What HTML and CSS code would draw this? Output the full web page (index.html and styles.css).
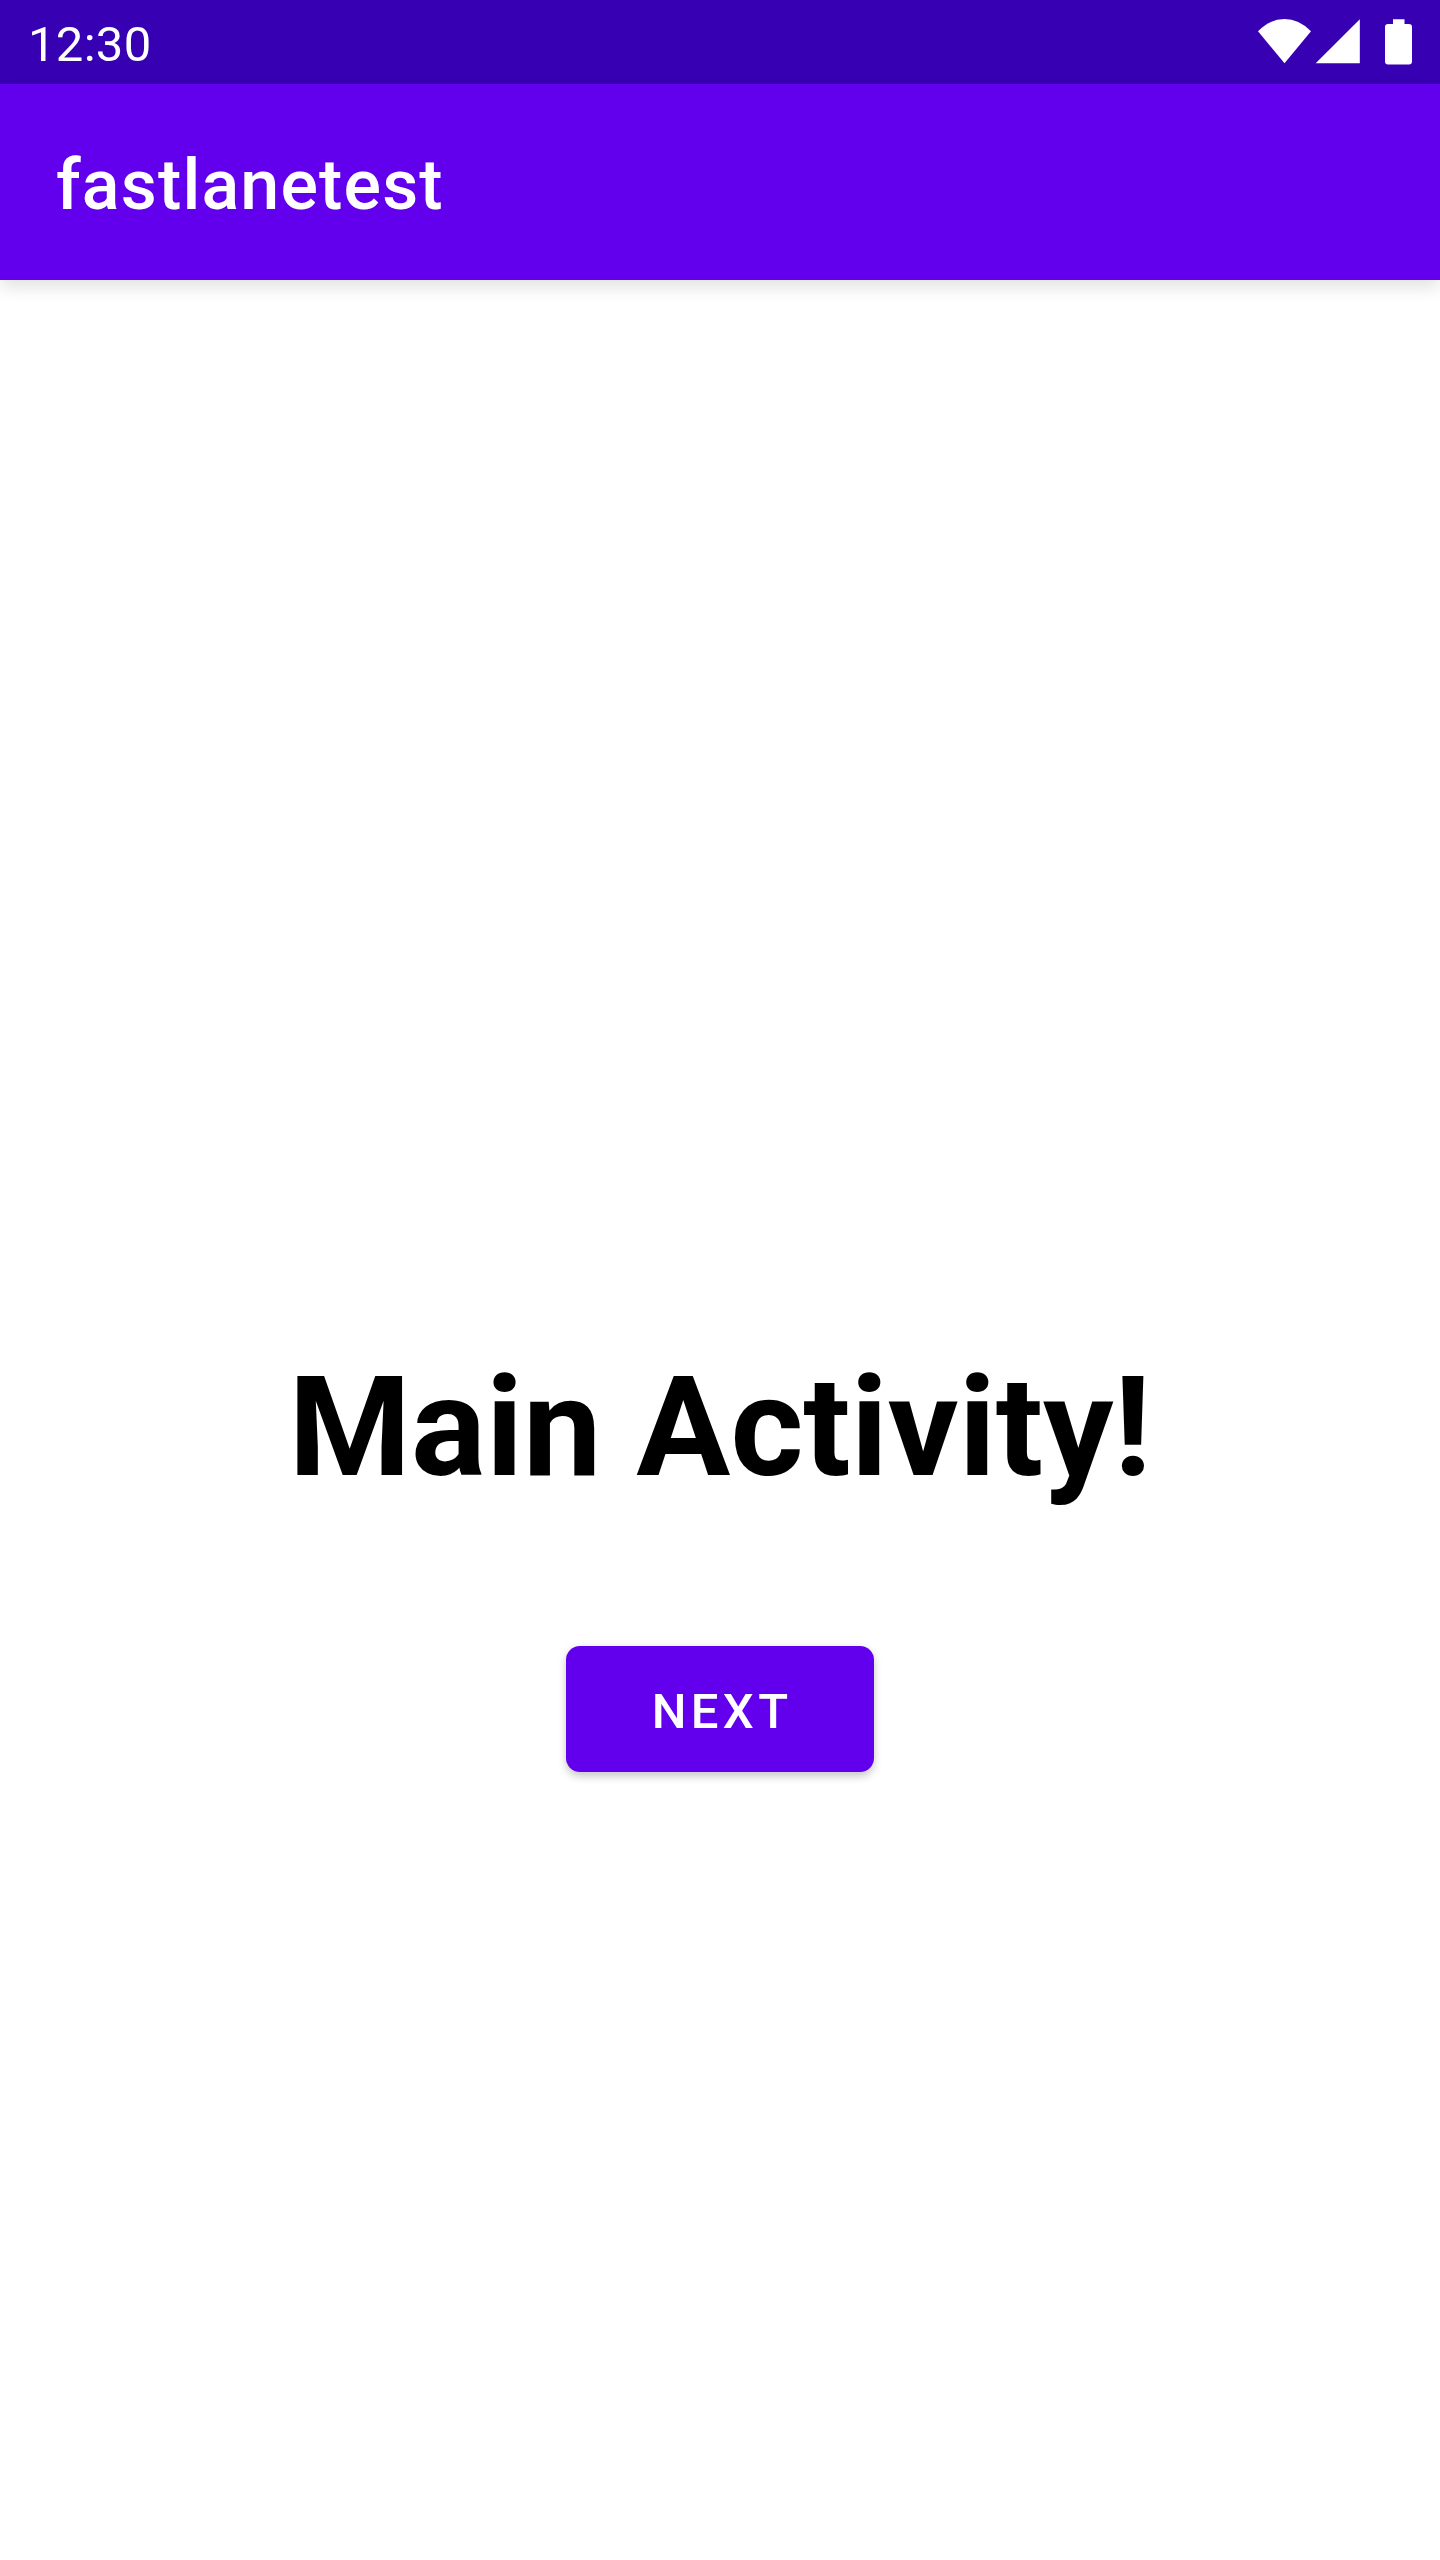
FILE: index.html
```
<!DOCTYPE html>
<html lang="en">
<head>
<meta charset="utf-8">
<title>fastlanetest</title>
<link rel="stylesheet" href="styles.css">
</head>
<body>
<div class="screen">
  <div class="status-bar">
    <span class="clock">12:30</span>
    <svg class="status-icons" width="160" height="84" viewBox="0 0 160 84" fill="#fff" aria-hidden="true">
      <path d="M44.5 63.3 18 31.2Q30 19 44.5 19T71 31.2Z"/>
      <path d="M75.7 63.3 119.8 19.2V63.3Z"/>
      <path d="M153 19.2h11.5V24h4.500a3 3 0 0 1 3 3v34.500a3 3 0 0 1-3 3h-21a3 3 0 0 1-3-3V27a3 3 0 0 1 3-3h5z"/>
    </svg>
  </div>
  <header class="app-bar"><span class="app-title">fastlanetest</span></header>
  <main class="content">
    <h1 class="headline">Main Activity!</h1>
    <button class="next-button" type="button">NEXT</button>
  </main>
</div>
</body>
</html>
```
FILE: styles.css
```
body {
  margin: 0;
  font-family: Roboto, sans-serif;
  background: #fff;
}

.screen {
  display: flex;
  flex-direction: column;
  height: 2560px;
  overflow: hidden;
}

.status-bar {
  display: flex;
  justify-content: space-between;
  align-items: center;
  box-sizing: border-box;
  height: 84px;
  padding: 0 40px 0 28px;
  background: #3700b3;
  color: #fff;
}

.clock {
  padding-top: 6px;
  font-size: 49px;
  line-height: 58px;
  letter-spacing: 0.3px;
}

.status-icons {
  overflow: visible;
}

.app-bar {
  display: flex;
  align-items: center;
  box-sizing: border-box;
  height: 196px;
  padding: 6px 56px 0;
  background: #6200ee;
  color: #fff;
  box-shadow: 0 8px 16px -1px rgba(0, 0, 0, 0.12);
}

.app-title {
  font-size: 70px;
  font-weight: 500;
  line-height: 82px;
  letter-spacing: 0.0165em;
}

.content {
  display: flex;
  flex-direction: column;
  align-items: center;
  padding-top: 1065px;
}

.headline {
  margin: 0;
  font-size: 140px;
  font-weight: 700;
  line-height: 164px;
}

.next-button {
  width: 308px;
  height: 126px;
  margin-top: 137px;
  padding: 6px 0 0 4px;
  border: 0;
  border-radius: 14px;
  background: #6200ee;
  color: #fff;
  font-family: inherit;
  font-size: 49px;
  font-weight: 500;
  line-height: 58px;
  letter-spacing: 0.0893em;
  box-shadow: 0 5px 9px rgba(0, 0, 0, 0.18), 0 0 8px rgba(0, 0, 0, 0.06);
}
```
